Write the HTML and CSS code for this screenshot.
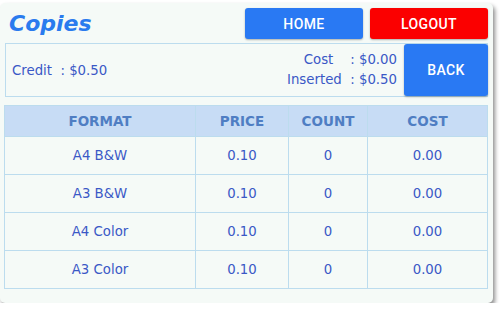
FILE: index.html
```html
<!DOCTYPE html>
<html>
<head>
<meta charset="utf-8">
<link rel="stylesheet" href="styles.css">
</head>
<body>
<div class="panel">
  <div class="header">
    <div class="title">Copies</div>
    <div class="nav">
      <button class="btn btn-blue">HOME</button>
      <button class="btn btn-red">LOGOUT</button>
    </div>
  </div>
  <div class="info">
    <div class="credit">Credit  : $0.50</div>
    <div class="totals">
      <div class="line">Cost    : $0.00</div>
      <div class="line">Inserted  : $0.50</div>
    </div>
    <button class="btn btn-blue back">BACK</button>
  </div>
  <table class="grid">
    <colgroup>
      <col class="c1"><col class="c2"><col class="c3"><col class="c4">
    </colgroup>
    <thead>
      <tr><th>FORMAT</th><th>PRICE</th><th>COUNT</th><th>COST</th></tr>
    </thead>
    <tbody>
      <tr><td>A4 B&amp;W</td><td>0.10</td><td>0</td><td>0.00</td></tr>
      <tr><td>A3 B&amp;W</td><td>0.10</td><td>0</td><td>0.00</td></tr>
      <tr><td>A4 Color</td><td>0.10</td><td>0</td><td>0.00</td></tr>
      <tr><td>A3 Color</td><td>0.10</td><td>0</td><td>0.00</td></tr>
    </tbody>
  </table>
</div>
</body>
</html>
```
FILE: styles.css
```css
html, body {
  margin: 0;
  padding: 0;
  background: #ffffff;
}
body {
  font-family: "DejaVu Sans", sans-serif;
  color: #3a58c6;
}
.panel {
  margin-top: 3px;
  width: 493px;
  height: 300px;
  box-sizing: border-box;
  background: #f5faf7;
  border-radius: 5px;
  box-shadow: 2px 3px 4px rgba(0, 0, 0, 0.45);
  overflow: hidden;
}
.header {
  display: flex;
  align-items: center;
  padding: 5px 5px 0 9px;
  height: 31px;
}
.title {
  font-size: 22px;
  font-weight: bold;
  font-style: italic;
  color: #2a7bee;
  line-height: 31px;
}
.nav {
  margin-left: auto;
  display: flex;
  gap: 7px;
}
.btn {
  border: none;
  border-radius: 3px;
  color: #ffffff;
  font-family: Roboto, "Liberation Sans", sans-serif;
  font-weight: 500;
  font-size: 14px;
  letter-spacing: 0.4px;
  width: 118px;
  height: 31px;
  padding: 0;
  box-shadow: 0 1px 2px rgba(0, 0, 0, 0.3);
}
.btn-blue {
  background: #2979f3;
}
.btn-red {
  background: #fb0000;
}
.info {
  margin: 4px 5px 0 5px;
  height: 54px;
  box-sizing: border-box;
  border: 1px solid #bcdcee;
  display: flex;
  align-items: center;
  font-size: 13.3px;
}
.credit {
  padding-left: 6px;
  white-space: pre;
}
.totals {
  margin-left: auto;
  margin-right: 7px;
  text-align: right;
  line-height: 20px;
}
.line {
  white-space: pre;
}
.back {
  width: 84px;
  height: 52px;
  margin-right: -1px;
}
.grid {
  margin: 8px 0 0 4px;
  width: 483px;
  border-collapse: collapse;
  font-size: 13.3px;
  table-layout: fixed;
}
.c1 { width: 191px; }
.c2 { width: 93px; }
.c3 { width: 79px; }
.c4 { width: 120px; }
.grid th, .grid td {
  border: 1px solid #bcdcee;
  text-align: center;
  padding: 0;
}
.grid th {
  background: #c7dcf5;
  color: #4f7ec3;
  font-weight: bold;
  font-size: 13.5px;
  height: 30px;
}
.grid td {
  height: 37px;
  color: #3a58c6;
}
```
